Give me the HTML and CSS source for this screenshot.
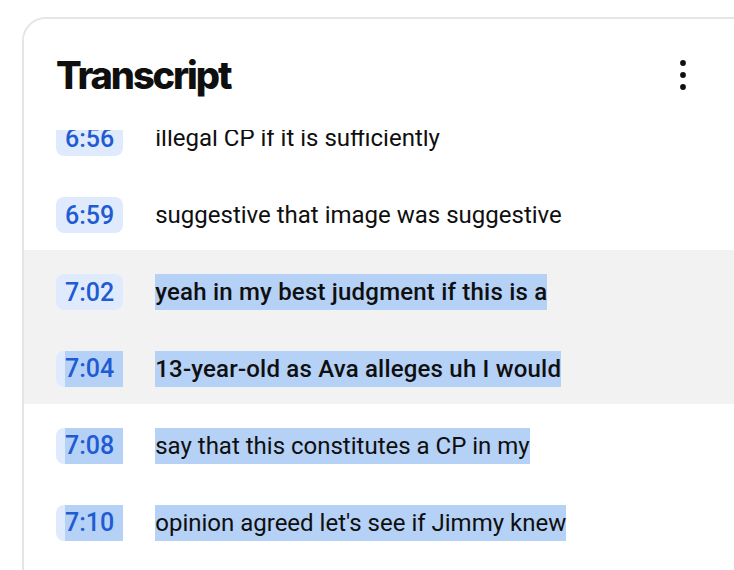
FILE: index.html
```html
<!DOCTYPE html>
<html lang="en">
<head>
    <meta charset="UTF-8">
    <meta name="viewport" content="width=device-width, initial-scale=1.0">
    <title>Transcript</title>
    <link rel="stylesheet" href="styles.css">
</head>
<body>
    <div class="panel">
        <div class="panel-head">
            <h2 class="panel-title">Transcript</h2>
            <button class="menu-btn" aria-label="More actions">
                <svg width="48" height="48" viewBox="0 0 24 24">
                    <circle cx="12" cy="6" r="1.45"/>
                    <circle cx="12" cy="12" r="1.45"/>
                    <circle cx="12" cy="18" r="1.45"/>
                </svg>
            </button>
        </div>
        <div class="segments">
            <div class="segment-list">
                <div class="segment">
                    <div class="stamp">6:56</div>
                    <div class="seg-text">illegal CP if it is sufficiently</div>
                </div>
                <div class="segment">
                    <div class="stamp">6:59</div>
                    <div class="seg-text">suggestive that image was suggestive</div>
                </div>
                <div class="segment active">
                    <div class="stamp">7:02</div>
                    <div class="seg-text"><span class="sel">yeah in my best judgment if this is a</span></div>
                </div>
                <div class="segment active">
                    <div class="stamp picked"><span class="sel">7:04</span></div>
                    <div class="seg-text"><span class="sel">13-year-old as Ava alleges uh I would</span></div>
                </div>
                <div class="segment">
                    <div class="stamp picked"><span class="sel">7:08</span></div>
                    <div class="seg-text"><span class="sel">say that this constitutes a CP in my</span></div>
                </div>
                <div class="segment">
                    <div class="stamp picked"><span class="sel">7:10</span></div>
                    <div class="seg-text"><span class="sel">opinion agreed let's see if Jimmy knew</span></div>
                </div>
            </div>
        </div>
    </div>
</body>
</html>
```

FILE: styles.css
```css
body {
    margin: 0;
    background: #fff;
    font-family: 'Roboto', 'Liberation Sans', sans-serif;
    color: #0f0f0f;
    overflow: hidden;
}
.panel {
    width: 760px;
    height: 620px;
    margin: 17px 0 0 22px;
    border: 2px solid #e5e5e5;
    border-radius: 24px;
    display: flex;
    flex-direction: column;
    overflow: hidden;
}
.panel-head {
    height: 111px;
    flex-shrink: 0;
    display: flex;
    align-items: center;
    justify-content: space-between;
    padding: 0 77px 0 32px;
    background: #fff;
    position: relative;
    z-index: 1;
}
.panel-title {
    margin: 0;
    font-family: 'Inter', 'Noto Sans', sans-serif;
    font-weight: 800;
    font-size: 38px;
    line-height: 52px;
    letter-spacing: -2.1px;
    color: #0f0f0f;
}
.menu-btn {
    width: 48px;
    height: 48px;
    padding: 0;
    border: none;
    background: none;
    fill: #0f0f0f;
}
.menu-btn svg { display: block; }
.segments {
    flex: 1;
    overflow: hidden;
}
/* list is scrolled a bit, first row sits under the header */
.segment-list { margin-top: -34px; }
.segment {
    display: flex;
    align-items: center;
    height: 77px;
    box-sizing: border-box;
    padding: 7px 0 0 32px;
}
.segment.active { background: #f2f2f2; }
.stamp {
    display: flex;
    align-items: center;
    height: 36px;
    padding: 0 9px;
    margin-right: 32px;
    border-radius: 8px;
    background: #dfebfc;
    color: #1f5bd3;
    font-size: 25px;
    font-weight: 500;
}
.stamp.picked { padding-right: 0; }
.stamp.picked .sel {
    height: 36px;
    line-height: 36px;
    padding-right: 9px;
}
.seg-text {
    font-size: 24px;
    line-height: 36px;
    white-space: nowrap;
}
.active .seg-text {
    font-weight: 500;
    letter-spacing: 0.2px;
}
.sel {
    display: inline-block;
    background: #b5d1f6;
}
```
